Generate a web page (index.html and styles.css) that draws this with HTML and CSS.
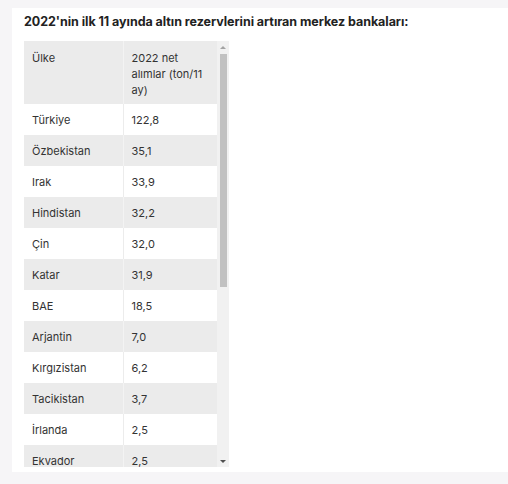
FILE: index.html
```html
<!doctype html>
<html lang="tr">
<head>
    <meta charset="utf-8">
    <title>Merkez bankaları altın alımları</title>
    <link rel="stylesheet" href="styles.css">
</head>
<body>
    <div class="panel">
        <p class="title">2022'nin ilk 11 ayında altın rezervlerini artıran merkez bankaları:</p>
        <div class="box">
            <div class="view">
                <table class="data">
                    <tr class="head">
                        <td class="c1">Ülke</td>
                        <td class="c2">2022 net alımlar (ton/11 ay)</td>
                    </tr>
                    <tr><td class="c1">Türkiye</td><td class="c2">122,8</td></tr>
                    <tr><td class="c1">Özbekistan</td><td class="c2">35,1</td></tr>
                    <tr><td class="c1">Irak</td><td class="c2">33,9</td></tr>
                    <tr><td class="c1">Hindistan</td><td class="c2">32,2</td></tr>
                    <tr><td class="c1">Çin</td><td class="c2">32,0</td></tr>
                    <tr><td class="c1">Katar</td><td class="c2">31,9</td></tr>
                    <tr><td class="c1">BAE</td><td class="c2">18,5</td></tr>
                    <tr><td class="c1">Arjantin</td><td class="c2">7,0</td></tr>
                    <tr><td class="c1">Kırgızistan</td><td class="c2">6,2</td></tr>
                    <tr><td class="c1">Tacikistan</td><td class="c2">3,7</td></tr>
                    <tr><td class="c1">İrlanda</td><td class="c2">2,5</td></tr>
                    <tr><td class="c1">Ekvador</td><td class="c2">2,5</td></tr>
                </table>
            </div>
            <div class="scrollbar">
                <div class="btn btn-up"></div>
                <div class="track"><div class="thumb"></div></div>
                <div class="btn btn-down"></div>
            </div>
        </div>
    </div>
</body>
</html>
```

FILE: styles.css
```css
html {
    background: #f6f5f7;
}
body {
    margin: 0;
    padding: 8px 0 0 12px;
    font-family: "Inter", "Noto Sans", sans-serif;
}
.panel {
    background: #fff;
    height: 464px;
    padding: 0 12px;
    box-sizing: border-box;
}
.title {
    margin: 0;
    padding-top: 6px;
    height: 27px;
    font-size: 12.5px;
    font-weight: 700;
    color: #222;
    letter-spacing: -0.05px;
}
.box {
    display: flex;
    width: 205px;
    height: 426px;
}
.view {
    width: 193px;
    height: 426px;
    overflow: hidden;
}
.data {
    border-collapse: collapse;
    width: 193px;
    font-size: 11px;
    color: #333;
}
.data td {
    height: 31px;
    padding: 0 8px;
    box-sizing: border-box;
    vertical-align: middle;
}
.data .c1 {
    width: 99px;
    border-right: 1px solid #ececec;
}
.data tr:nth-child(even) td {
    background: #fff;
}
.data tr:nth-child(odd) td {
    background: #ebebeb;
    border-right-color: #f3f3f3;
}
.data tr.head td {
    height: 63px;
    padding-top: 9px;
    vertical-align: top;
    line-height: 16px;
}
.scrollbar {
    width: 12px;
    background: #f1f1f1;
    display: flex;
    flex-direction: column;
}
.btn {
    height: 12px;
    display: flex;
    justify-content: center;
    align-items: center;
}
.btn-up::before {
    content: "";
    border-left: 3px solid transparent;
    border-right: 3px solid transparent;
    border-bottom: 3px solid #a3a3a3;
}
.btn-down::before {
    content: "";
    border-left: 3px solid transparent;
    border-right: 3px solid transparent;
    border-top: 3px solid #505050;
}
.track {
    flex: 1;
    padding: 1px 2px 0 3px;
}
.thumb {
    height: 233px;
    background: #c1c1c1;
}
```
